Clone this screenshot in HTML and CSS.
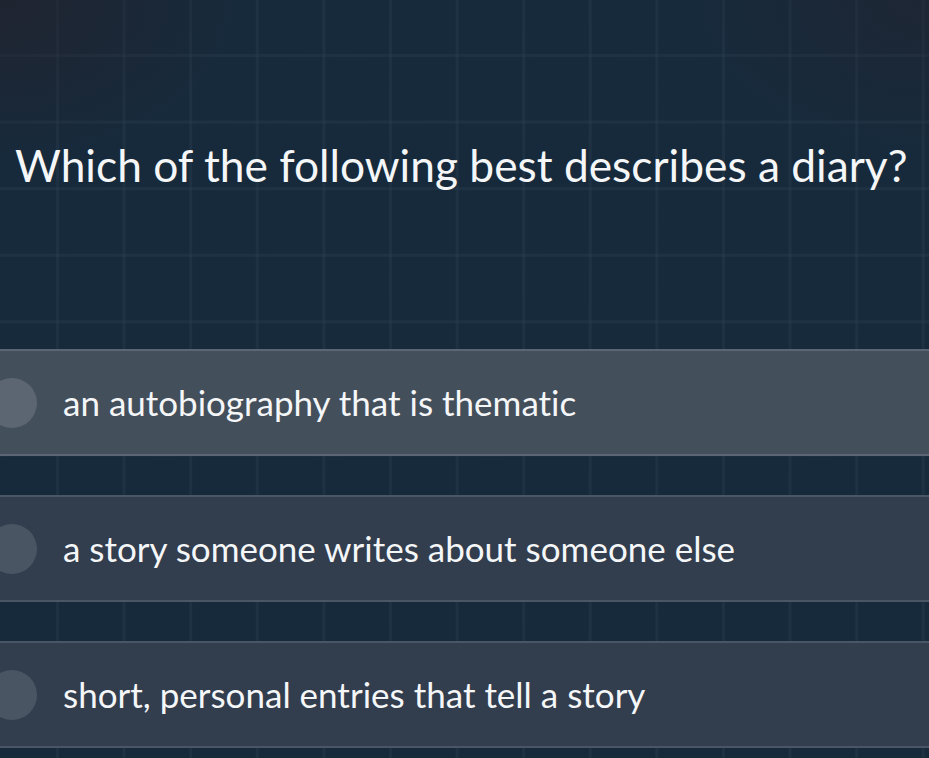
FILE: index.html
```html
<!DOCTYPE html>
<html lang="en">
<head>
<meta charset="utf-8">
<title>Quiz question</title>
<link rel="stylesheet" href="styles.css">
</head>
<body>
<main class="quiz">
  <h1 class="question">Which of the following best describes a diary?</h1>
  <ul class="options">
    <li class="option option--hover"><span class="radio"></span><span class="label">an autobiography that is thematic</span></li>
    <li class="option"><span class="radio"></span><span class="label">a story someone writes about someone else</span></li>
    <li class="option"><span class="radio"></span><span class="label">short, personal entries that tell a story</span></li>
  </ul>
</main>
</body>
</html>
```

FILE: styles.css
```css
html, body {
  margin: 0;
  padding: 0;
  height: 100%;
}

body {
  font-family: Lato, "Open Sans", sans-serif;
  font-variant-ligatures: none;
  color: #f4f6f8;
  background-color: #172a3b;
  background-image:
    radial-gradient(ellipse 240px 160px at 0 0, rgba(38, 32, 42, 0.6), rgba(38, 32, 42, 0)),
    radial-gradient(ellipse 240px 150px at 100% 0, rgba(38, 34, 46, 0.45), rgba(38, 34, 46, 0)),
    linear-gradient(to right, rgba(44, 64, 82, 0.35) 3px, transparent 3px),
    linear-gradient(to bottom, rgba(44, 64, 82, 0.35) 3px, transparent 3px);
  background-size: auto, auto, 66.6px 66.6px, 66.6px 66.6px;
  background-position: 0 0, 0 0, 56px 0, 0 54px;
  overflow: hidden;
}

.quiz {
  padding-top: 135px;
}

.question {
  margin: 0 0 0 15px;
  font-size: 44.3px;
  font-weight: 400;
  line-height: 60px;
  white-space: nowrap;
}

.options {
  list-style: none;
  margin: 154px 0 0;
  padding: 0;
  display: flex;
  flex-direction: column;
  gap: 39px;
}

.option {
  height: 103px;
  display: flex;
  align-items: center;
  gap: 26px;
  background: #323d4d;
  border-top: 2px solid #4a5565;
  border-bottom: 2px solid #4a5565;
}

.option--hover {
  background: #444f5c;
  border-color: #5b6573;
}

.radio {
  flex: none;
  width: 50px;
  height: 50px;
  margin-left: -13px;
  border-radius: 50%;
  background: #4a5564;
}

.option--hover .radio {
  background: #5b6672;
}

.label {
  font-size: 35px;
  line-height: 40px;
  padding-bottom: 2px;
  white-space: nowrap;
}
```
